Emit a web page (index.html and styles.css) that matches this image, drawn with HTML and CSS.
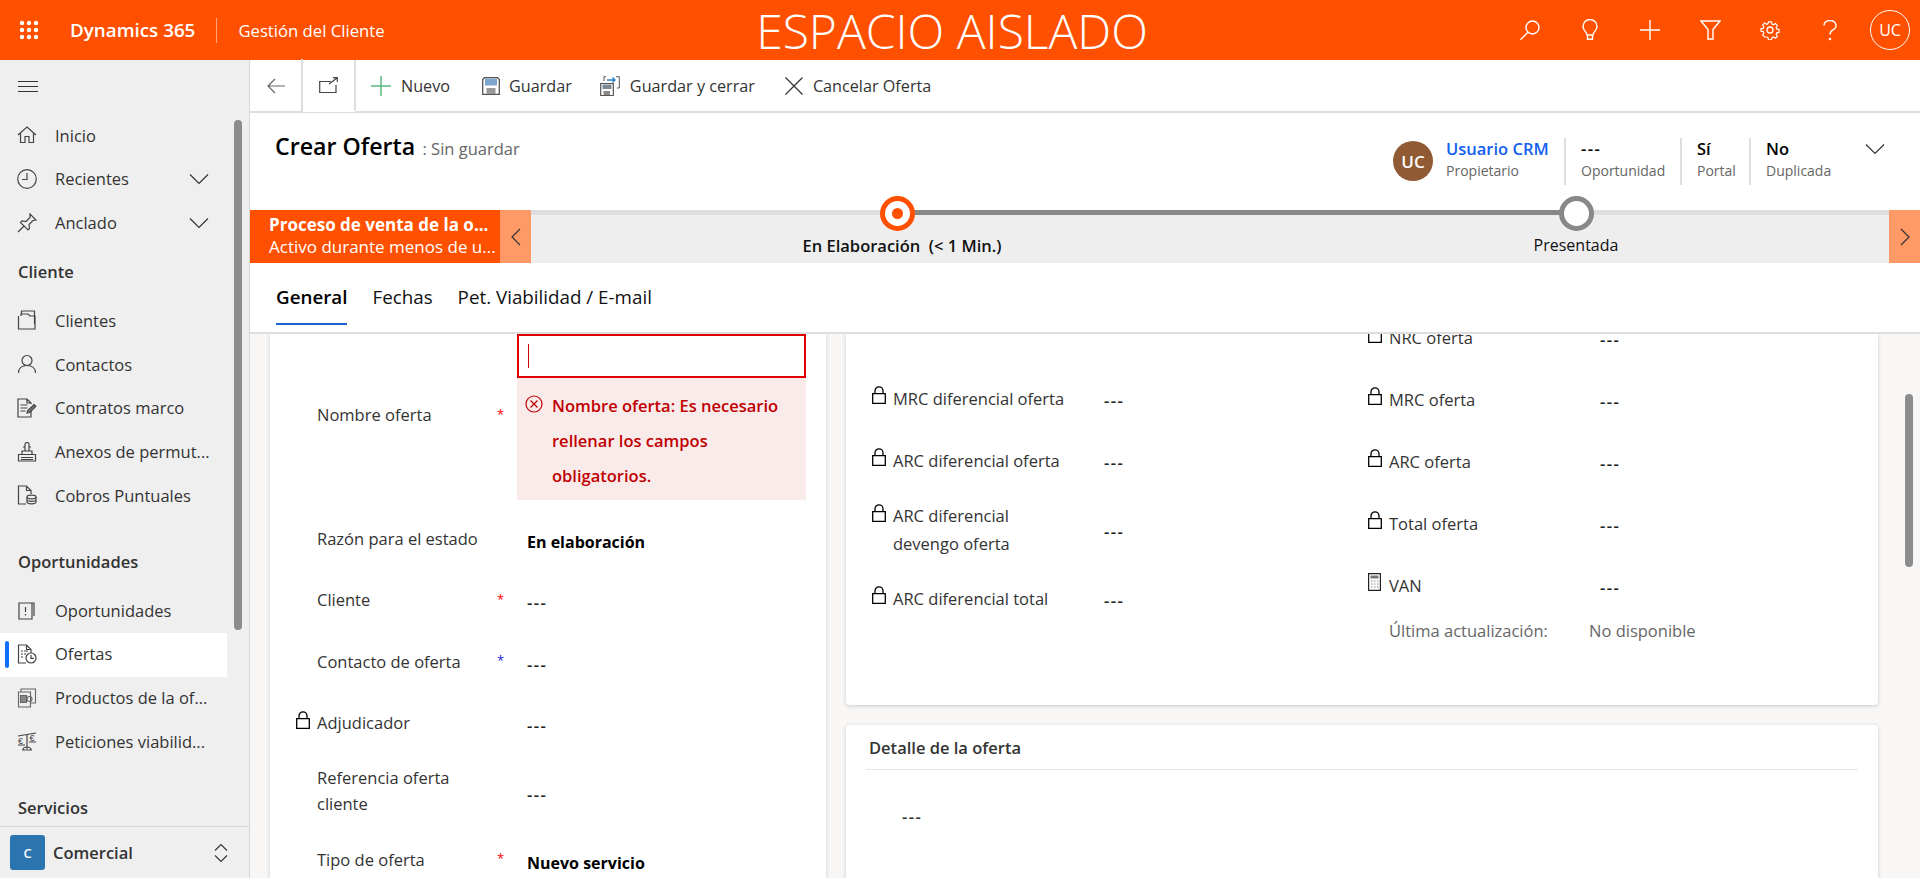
FILE: index.html
```html
<!DOCTYPE html>
<html lang="es">
<head>
    <meta charset="UTF-8">
    <title>Crear Oferta</title>
    <link rel="stylesheet" href="styles.css">
</head>
<body>
    <svg class="defs" width="0" height="0">
        <symbol id="lock" viewBox="0 0 14 18"><path d="M3 8V4.8a4 4 0 0 1 8 0V8M.7 7.7h12.6v9.6H.7z" fill="none" stroke="#000" stroke-width="1.3"/></symbol>
        <symbol id="chev" viewBox="0 0 20 12"><path d="M1 1.5l9 9 9-9" fill="none" stroke="#333" stroke-width="1.2"/></symbol>
    </svg>

    <header class="topbar">
        <div class="brand">
            <svg class="waffle" width="20" height="20" viewBox="0 0 20 20" fill="#fff"><circle cx="3" cy="3" r="2.2"/><circle cx="10" cy="3" r="2.2"/><circle cx="17" cy="3" r="2.2"/><circle cx="3" cy="10" r="2.2"/><circle cx="10" cy="10" r="2.2"/><circle cx="17" cy="10" r="2.2"/><circle cx="3" cy="17" r="2.2"/><circle cx="10" cy="17" r="2.2"/><circle cx="17" cy="17" r="2.2"/></svg>
            <span class="product">Dynamics 365</span>
            <span class="app-name">Gestión del Cliente</span>
        </div>
        <div class="env-title">ESPACIO AISLADO</div>
        <div class="top-actions">
            <span class="top-btn"><svg width="22" height="22" viewBox="0 0 22 22" fill="none" stroke="#fff" stroke-width="1.4"><circle cx="13.5" cy="8.5" r="6.5"/><path d="M9 13.2L1.5 20.7"/></svg></span>
            <span class="top-btn"><svg width="16" height="22" viewBox="0 0 16 22" fill="none" stroke="#fff" stroke-width="1.4"><path d="M5 16c0-3-4-4.5-4-8.5a7 7 0 0 1 14 0c0 4-4 5.5-4 8.5zM5.5 16v4.3h5V16"/></svg></span>
            <span class="top-btn"><svg width="20" height="20" viewBox="0 0 20 20" stroke="#fff" stroke-width="1.4"><path d="M0 10h20M10 0v20"/></svg></span>
            <span class="top-btn"><svg width="21" height="20" viewBox="0 0 21 20" fill="none" stroke="#fff" stroke-width="1.4"><path d="M1 1h19l-7 8.5V19H8V9.5z"/></svg></span>
            <span class="top-btn"><svg width="20" height="20" viewBox="0 0 20 20" fill="none" stroke="#fff" stroke-width="1.3"><circle cx="10" cy="10" r="3"/><path d="M8.3 1h3.4l.5 2.5 1.6.7 2.2-1.4 2.2 2.2-1.4 2.2.7 1.6 2.5.5v3.4l-2.5.5-.7 1.6 1.4 2.2-2.2 2.2-2.2-1.4-1.6.7-.5 2.5H8.3l-.5-2.5-1.6-.7L4 17.8l-2.2-2.2 1.4-2.2-.7-1.6L0 11.3V8.7l2.5-.5.7-1.6L1.800 4.4 4 2.2l2.2 1.4 1.6-.7z" transform="translate(1 1) scale(.9)"/></svg></span>
            <span class="top-btn"><svg width="14" height="21" viewBox="0 0 14 21" fill="none" stroke="#fff" stroke-width="1.4"><path d="M1 5.5a6 5 0 1 1 9 4.3c-2 1.2-3 2.2-3 4.7"/><circle cx="7" cy="19" r=".6" fill="#fff"/></svg></span>
            <span class="top-btn"><span class="me">UC</span></span>
        </div>
    </header>

    <div class="shell">
        <nav class="sitemap">
            <div class="burger"><svg width="20" height="11" viewBox="0 0 20 11" stroke="#333" stroke-width="1"><path d="M0 .5h20M0 5.5h20M0 10.5h20"/></svg></div>
            <div class="nav-list">
                <a class="nav-item"><svg class="ni" width="20" height="20" viewBox="0 0 20 20" fill="none" stroke="#444" stroke-width="1.2"><path d="M1 10l9-8 9 8M3.500 8v9.500H8v-6h4v6h4.500V8"/></svg>Inicio</a>
                <a class="nav-item"><svg class="ni" width="20" height="20" viewBox="0 0 20 20" fill="none" stroke="#444" stroke-width="1.2"><circle cx="10" cy="10" r="9.3"/><path d="M10 4v6.5H5"/></svg>Recientes<svg class="nav-chev" width="20" height="12"><use href="#chev"/></svg></a>
                <a class="nav-item"><svg class="ni" width="20" height="20" viewBox="0 0 20 20" fill="none" stroke="#444" stroke-width="1.2"><path d="M13 1l6 6-3 .5-4 4 .5 4L11 17 3.5 9.5 5 8l4 .5 4-4zM7 13l-6 6"/></svg>Anclado<svg class="nav-chev" width="20" height="12"><use href="#chev"/></svg></a>

                <div class="nav-head nav-head-first">Cliente</div>
                <a class="nav-item"><svg class="ni" width="20" height="20" viewBox="0 0 20 20" fill="none" stroke="#444" stroke-width="1.2"><path d="M1.5 6v13H18V6h-5l-2-2H4v2M4.500 4V1h13v13"/></svg>Clientes</a>
                <a class="nav-item"><svg class="ni" width="20" height="20" viewBox="0 0 20 20" fill="none" stroke="#444" stroke-width="1.2"><circle cx="10" cy="6.5" r="5"/><path d="M1.5 19c0-5 3.500-7.500 8.500-7.500s8.500 2.500 8.500 7.500"/></svg>Contactos</a>
                <a class="nav-item"><svg class="ni" width="20" height="20" viewBox="0 0 20 20" fill="none" stroke="#444" stroke-width="1.2"><path d="M14 11v8H1V1h9l4 4v1M10 1v4h4M3.5 7h7M3.5 10h7M3.5 13h5"/><path d="M10 15l.8-2.5L17 6.5l1.800 1.800-6 6.200z" fill="#777"/></svg>Contratos marco</a>
                <a class="nav-item"><svg class="ni" width="20" height="20" viewBox="0 0 20 20" fill="none" stroke="#444" stroke-width="1.2"><path d="M1.5 12.5h17V19h-17zM5 12.5V9h10v3.5M8 9V2.5a2 2 0 0 1 4 0V9M6 5h2M12 5h2M4 15.5h12M4 17.5h12"/></svg>Anexos de permut...</a>
                <a class="nav-item"><svg class="ni" width="20" height="20" viewBox="0 0 20 20" fill="none" stroke="#444" stroke-width="1.2"><path d="M9 19H1.5V1h8L14 5.5V9M9.500 1v4.500H14"/><ellipse cx="14.5" cy="12" rx="4.5" ry="1.8"/><path d="M10 12v5c0 1 2 1.800 4.500 1.800S19 18 19 17v-5M10 14.500c0 1 2 1.800 4.500 1.800s4.500-.8 4.500-1.800"/></svg>Cobros Puntuales</a>

                <div class="nav-head">Oportunidades</div>
                <a class="nav-item"><svg class="ni" width="20" height="20" viewBox="0 0 20 20" fill="none" stroke="#444" stroke-width="1.2"><path d="M2 3v16h13V3zM7 3h10v13"/><path d="M8.5 7v5M8.5 14v1.5"/></svg>Oportunidades</a>
                <a class="nav-item nav-item-on"><svg class="ni" width="20" height="20" viewBox="0 0 20 20" fill="none" stroke="#444" stroke-width="1.2"><path d="M9 19H1.500V1h8L14 5.500V9M9.500 1v4.500H14M4 7h2M7 7h4M4 10h2M7 10h2M4 13h2"/><circle cx="14" cy="14" r="5"/><path d="M14 11v3.3h3"/></svg>Ofertas</a>
                <a class="nav-item"><svg class="ni" width="20" height="20" viewBox="0 0 20 20" fill="none" stroke="#666" stroke-width="1.1"><path d="M1.5 4h12v15h-12zM4 4V1h14.500v14h-5"/><path d="M3.5 7.5h6v7h-6z" fill="#888"/><circle cx="12.5" cy="11" r="2.5"/></svg>Productos de la of...</a>
                <a class="nav-item"><svg class="ni" width="20" height="20" viewBox="0 0 20 20" fill="none" stroke="#444" stroke-width="1.2"><path d="M1 5l18-3M10 3v15M5 19h10M6 19c0-2 2-3 4-3s4 1 4 3M1 14h7M12 11h7"/><text x="1" y="13" font-size="9" fill="#444" stroke="none" font-family="Liberation Sans">€</text><text x="12.5" y="10" font-size="9" fill="#444" stroke="none" font-family="Liberation Sans">€</text></svg>Peticiones viabilid...</a>

                <div class="nav-head">Servicios</div>
            </div>
            <div class="area-switch">
                <span class="area-tile">C</span>
                <span class="area-name">Comercial</span>
                <svg width="14" height="20" viewBox="0 0 14 20" fill="none" stroke="#333" stroke-width="1.1"><path d="M1 7.500l6-6 6 6M1 12.500l6 6 6-6"/></svg>
            </div>
            <span class="nav-thumb"></span>
        </nav>

        <main class="workspace">
            <div class="toolbar">
                <span class="tool-nav"><svg width="18" height="16" viewBox="0 0 18 16" fill="none" stroke="#666" stroke-width="1.2"><path d="M18 8H1M8 1L1 8l7 7"/></svg></span>
                <span class="tool-nav tool-nav-b"><svg width="19" height="16" viewBox="0 0 19 16" fill="none" stroke="#444" stroke-width="1.2"><path d="M17 8v7.500H.7V4.500h11M10 7l8-6M14 .7h4.300V5"/></svg></span>
                <a class="tool tool-new"><svg width="20" height="20" viewBox="0 0 20 20" stroke="#5cb97f" stroke-width="1.5"><path d="M0 10h20M10 0v20"/></svg>Nuevo</a>
                <a class="tool tool-save"><svg width="18" height="18" viewBox="0 0 18 18"><path d="M.7 2.500 2.500.7h13l1.800 1.800v15H.7z" fill="#fff" stroke="#555" stroke-width="1.3"/><path d="M3 1.500h12v7H3z" fill="#7ea6cc"/><path d="M4.500 11h9v6h-9z" fill="#999"/></svg>Guardar</a>
                <a class="tool tool-saveclose"><svg width="20" height="20" viewBox="0 0 20 20"><path d="M.7 7.500h12.600v12H.7z" fill="#fff" stroke="#555" stroke-width="1.2"/><path d="M2.500 8.500h9V13h-9z" fill="#7c8a96"/><path d="M3.500 15H10v4H3.500z" fill="#888"/><path d="M4 5V.7h2M16 .7h3.300V12H17" fill="none" stroke="#555"/><path d="M7 4h8M12.500 1.500 15 4l-2.500 2.500" fill="none" stroke="#2a7ec0" stroke-width="1.3"/></svg>Guardar y cerrar</a>
                <a class="tool tool-cancel"><svg width="18" height="18" viewBox="0 0 18 18" stroke="#333" stroke-width="1.2"><path d="M.5.5l17 17M17.500.5l-17 17"/></svg>Cancelar Oferta</a>
            </div>

            <div class="record-head">
                <div class="record-title"><span class="record-name">Crear Oferta</span><span class="record-state"> : Sin guardar</span></div>
                <div class="head-fields">
                    <span class="owner-pic">UC</span>
                    <div class="hf hf-owner"><a class="hf-link">Usuario CRM</a><span class="hf-label">Propietario</span></div>
                    <div class="hf hf-op"><span class="hf-value dash">---</span><span class="hf-label">Oportunidad</span></div>
                    <div class="hf hf-portal"><span class="hf-value">Sí</span><span class="hf-label">Portal</span></div>
                    <div class="hf hf-dup"><span class="hf-value">No</span><span class="hf-label">Duplicada</span></div>
                    <svg class="head-chev" width="20" height="12"><use href="#chev"/></svg>
                </div>
            </div>

            <div class="bpf">
                <div class="bpf-flag"><strong>Proceso de venta de la o...</strong><span>Activo durante menos de u...</span></div>
                <span class="bpf-arrow"><svg width="10" height="18" viewBox="0 0 10 18" fill="none" stroke="#333" stroke-width="1.2"><path d="M9 1L1 9l8 8"/></svg></span>
                <div class="bpf-track">
                    <span class="bpf-line"></span>
                    <div class="stage stage-on"><span class="stage-dot"></span><span class="stage-label">En Elaboración&nbsp; (&lt; 1 Min.)</span></div>
                    <div class="stage stage-next"><span class="stage-dot"></span><span class="stage-label">Presentada</span></div>
                </div>
                <span class="bpf-arrow"><svg width="10" height="18" viewBox="0 0 10 18" fill="none" stroke="#333" stroke-width="1.2"><path d="M1 1l8 8-8 8"/></svg></span>
            </div>

            <div class="tabs">
                <a class="tab tab-on">General</a>
                <a class="tab">Fechas</a>
                <a class="tab">Pet. Viabilidad / E-mail</a>
            </div>

            <div class="form">
                <section class="card card-main">
                    <div class="field field-name">
                        <span class="lock-slot"></span>
                        <span class="f-label">Nombre oferta</span>
                        <span class="req">*</span>
                        <div class="f-input">
                            <div class="text-box"><span class="caret"></span></div>
                            <div class="err-box">
                                <svg width="18" height="18" viewBox="0 0 18 18" fill="none" stroke="#c00000" stroke-width="1.2"><circle cx="9" cy="9" r="8"/><path d="M5.500 5.500l7 7M12.500 5.500l-7 7"/></svg>
                                <span>Nombre oferta: Es necesario rellenar los campos obligatorios.</span>
                            </div>
                        </div>
                    </div>
                    <div class="field"><span class="lock-slot"></span><span class="f-label">Razón para el estado</span><span class="req"></span><span class="f-val f-bold">En elaboración</span></div>
                    <div class="field"><span class="lock-slot"></span><span class="f-label">Cliente</span><span class="req">*</span><span class="f-val dash">---</span></div>
                    <div class="field"><span class="lock-slot"></span><span class="f-label">Contacto de oferta</span><span class="req req-blue">*</span><span class="f-val dash">---</span></div>
                    <div class="field"><span class="lock-slot"><svg width="14" height="18"><use href="#lock"/></svg></span><span class="f-label">Adjudicador</span><span class="req"></span><span class="f-val dash">---</span></div>
                    <div class="field field-tall"><span class="lock-slot"></span><span class="f-label">Referencia oferta cliente</span><span class="req"></span><span class="f-val dash">---</span></div>
                    <div class="field"><span class="lock-slot"></span><span class="f-label">Tipo de oferta</span><span class="req">*</span><span class="f-val f-bold">Nuevo servicio</span></div>
                </section>

                <div class="side">
                    <section class="card card-amounts">
                        <div class="amount-col amount-left">
                            <div class="amount"><span class="lock-slot"><svg width="14" height="18"><use href="#lock"/></svg></span><span class="a-label">MRC diferencial oferta</span><span class="a-val dash">---</span></div>
                            <div class="amount"><span class="lock-slot"><svg width="14" height="18"><use href="#lock"/></svg></span><span class="a-label">ARC diferencial oferta</span><span class="a-val dash">---</span></div>
                            <div class="amount amount-tall"><span class="lock-slot"><svg width="14" height="18"><use href="#lock"/></svg></span><span class="a-label">ARC diferencial<br>devengo oferta</span><span class="a-val dash">---</span></div>
                            <div class="amount"><span class="lock-slot"><svg width="14" height="18"><use href="#lock"/></svg></span><span class="a-label">ARC diferencial total</span><span class="a-val dash">---</span></div>
                        </div>
                        <div class="amount-col amount-right">
                            <div class="amount"><span class="lock-slot"><svg width="14" height="18"><use href="#lock"/></svg></span><span class="a-label">NRC oferta</span><span class="a-val dash">---</span></div>
                            <div class="amount"><span class="lock-slot"><svg width="14" height="18"><use href="#lock"/></svg></span><span class="a-label">MRC oferta</span><span class="a-val dash">---</span></div>
                            <div class="amount"><span class="lock-slot"><svg width="14" height="18"><use href="#lock"/></svg></span><span class="a-label">ARC oferta</span><span class="a-val dash">---</span></div>
                            <div class="amount"><span class="lock-slot"><svg width="14" height="18"><use href="#lock"/></svg></span><span class="a-label">Total oferta</span><span class="a-val dash">---</span></div>
                            <div class="amount"><span class="lock-slot"><svg width="13" height="18" viewBox="0 0 13 18"><path d="M.6.6h11.800v16.800H.6z" fill="#fff" stroke="#222" stroke-width="1.2"/><path d="M2.500 2.500h8v3h-8z" fill="#777"/><path d="M3 8h1.500M6 8h1.500M9 8h1.500M3 11h1.500M6 11h1.500M9 11h1.500M3 14h1.500M6 14h1.500M9 14h1.500" stroke="#888"/></svg></span><span class="a-label">VAN</span><span class="a-val dash">---</span></div>
                            <div class="calc-note"><span class="note-label">Última actualización:</span><span>No disponible</span></div>
                        </div>
                    </section>
                    <section class="card card-detail">
                        <h2 class="detail-title">Detalle de la oferta</h2>
                        <div class="detail-val dash">---</div>
                    </section>
                </div>
            </div>
            <span class="form-thumb"></span>
        </main>
    </div>
</body>
</html>
```
FILE: styles.css
```css
* {
    box-sizing: border-box;
}
body {
    margin: 0;
    height: 100vh;
    display: flex;
    flex-direction: column;
    overflow: hidden;
    font-family: "Open Sans", "Liberation Sans", sans-serif;
    font-size: 16.5px;
    color: #333;
    background: #fff;
}
.defs {
    position: absolute;
}
svg {
    flex: none;
    display: block;
}
.dash {
    font-weight: 600;
    letter-spacing: 1.4px;
}

/* top bar */
.topbar {
    height: 60px;
    flex: none;
    display: flex;
    align-items: center;
    background: #ff5000;
    color: #fff;
}
.brand {
    width: 404px;
    display: flex;
    align-items: center;
    padding-left: 19px;
}
.product {
    margin-left: 31px;
    padding-right: 21px;
    font-size: 18.8px;
    font-weight: 600;
    white-space: nowrap;
}
.app-name {
    padding-left: 21px;
    font-size: 16.7px;
    white-space: nowrap;
    border-left: 1px solid #ffa57f;
    line-height: 25px;
}
.env-title {
    flex: 1;
    text-align: center;
    font-size: 48px;
    font-weight: 300;
    white-space: nowrap;
}
.top-actions {
    display: flex;
    width: 420px;
}
.top-btn {
    width: 60px;
    height: 60px;
    display: flex;
    align-items: center;
    justify-content: center;
}
.me {
    width: 40px;
    height: 40px;
    border-radius: 50%;
    border: 1px solid #fff;
    display: flex;
    align-items: center;
    justify-content: center;
    font-size: 16px;
}

.shell {
    flex: 1;
    min-height: 0;
    display: flex;
}

/* site map */
.sitemap {
    width: 250px;
    flex: none;
    display: flex;
    flex-direction: column;
    position: relative;
    background: #efefef;
    border-right: 1px solid #d8d8d8;
}
.burger {
    height: 54px;
    flex: none;
    padding: 21px 0 0 18px;
}
.nav-list {
    flex: 1;
    min-height: 0;
    overflow: hidden;
}
.nav-item {
    width: 227px;
    height: 43.75px;
    display: flex;
    align-items: center;
    position: relative;
    padding-left: 17px;
    padding-bottom: 1.5px;
    white-space: nowrap;
}
.ni {
    margin-right: 18px;
}
.nav-chev {
    margin-left: auto;
    margin-right: 18px;
}
.nav-item-on {
    background: #fff;
}
.nav-item-on::before {
    content: "";
    position: absolute;
    left: 5px;
    top: 8px;
    width: 4px;
    height: 27px;
    border-radius: 2px;
    background: #0f6fff;
}
.nav-head {
    margin-top: 17px;
    padding: 16px 0 16px 18px;
    line-height: 22px;
    font-weight: 600;
}
.nav-head-first {
    margin-top: 0;
}
.area-switch {
    height: 52px;
    flex: none;
    display: flex;
    align-items: center;
    padding: 0 21px 0 10px;
    border-top: 1px solid #d8d8d8;
}
.area-tile {
    width: 35px;
    height: 35px;
    display: flex;
    align-items: center;
    justify-content: center;
    border-radius: 3px;
    background: #2a74b0;
    color: #fff;
    font-size: 13px;
    font-weight: 600;
}
.area-name {
    flex: 1;
    margin-left: 8px;
    font-weight: 600;
}
.nav-thumb {
    position: absolute;
    left: 234px;
    top: 60px;
    width: 8px;
    height: 510px;
    border-radius: 4px;
    background: #8c8c8c;
}

/* main column */
.workspace {
    flex: 1;
    min-width: 0;
    display: flex;
    flex-direction: column;
    position: relative;
}
.toolbar {
    height: 53px;
    flex: none;
    display: flex;
    align-items: center;
    border-bottom: 2px solid #dedede;
}
.tool-nav {
    width: 53px;
    height: 53px;
    flex: none;
    display: flex;
    align-items: center;
    justify-content: center;
    border-right: 2px solid #dedede;
}
.tool-nav-b {
    height: 52px;
    align-self: flex-start;
    border-bottom: 2px solid #fff;
}
.tool {
    display: flex;
    align-items: center;
    font-size: 16.2px;
    white-space: nowrap;
}
.tool svg {
    margin-right: 10px;
}
.tool-new {
    margin-left: 15px;
}
.tool-save {
    margin-left: 32px;
}
.tool-save svg {
    margin-right: 9px;
}
.tool-saveclose {
    margin-left: 28px;
}
.tool-cancel {
    margin-left: 30px;
}

.record-head {
    height: 97px;
    flex: none;
    display: flex;
    justify-content: space-between;
}
.record-title {
    padding: 17px 0 0 25px;
}
.record-name {
    font-size: 23.2px;
    font-weight: 600;
    color: #000;
}
.record-state {
    color: #666;
    margin-left: 3px;
}
.head-fields {
    display: flex;
    align-items: flex-start;
    padding-top: 25px;
}
.owner-pic {
    width: 40px;
    height: 40px;
    margin-top: 3px;
    margin-right: 13px;
    border-radius: 50%;
    background: #8f5a34;
    color: #fff;
    font-size: 17px;
    font-weight: 600;
    display: flex;
    align-items: center;
    justify-content: center;
}
.hf {
    height: 47px;
    display: flex;
    flex-direction: column;
    padding-left: 15px;
    border-left: 2px solid #dedede;
    white-space: nowrap;
    line-height: 22px;
}
.hf-owner {
    width: 118px;
    padding-left: 0;
    border-left: 0;
}
.hf-op {
    width: 116px;
}
.hf-portal {
    width: 69px;
}
.hf-dup {
    width: 97px;
}
.hf-link {
    font-weight: 600;
    color: #1160f0;
}
.hf-value {
    font-weight: 600;
    color: #000;
}
.hf-label {
    font-size: 14px;
    color: #666;
}
.head-chev {
    margin: 5px 35px 0 19px;
}

/* process bar */
.bpf {
    height: 53px;
    flex: none;
    display: flex;
}
.bpf-flag {
    width: 250px;
    flex: none;
    padding: 4px 0 0 19px;
    display: flex;
    flex-direction: column;
    overflow: hidden;
    background: #ff5000;
    color: #fff;
    font-size: 17px;
    line-height: 21.5px;
    white-space: nowrap;
}
.bpf-flag strong {
    font-weight: 700;
}
.bpf-arrow {
    width: 31px;
    flex: none;
    display: flex;
    align-items: center;
    justify-content: center;
    background: #ff9966;
}
.bpf-track {
    flex: 1;
    min-width: 0;
    position: relative;
    display: flex;
    background: #eee;
    border-top: 5px solid #dedede;
    padding-left: 316px;
}
.bpf-line {
    position: absolute;
    left: 366px;
    top: -5px;
    width: 680px;
    height: 5px;
    background: #8a8886;
}
.stage {
    width: 100px;
    flex: none;
    display: flex;
    flex-direction: column;
    align-items: center;
    position: relative;
    margin-right: 579px;
}
.stage-dot {
    width: 35px;
    height: 35px;
    margin-top: -19px;
    border-radius: 50%;
    background: #fff;
    border: 5px solid #8a8886;
    position: relative;
}
.stage-on .stage-dot {
    border-color: #ff5000;
}
.stage-on .stage-dot::after {
    content: "";
    position: absolute;
    left: 7px;
    top: 7px;
    width: 11px;
    height: 11px;
    border-radius: 50%;
    background: #ff5000;
}
.stage-label {
    margin-top: 3px;
    font-size: 16px;
    white-space: nowrap;
    color: #111;
}
.stage-on .stage-label {
    font-size: 16.5px;
    font-weight: 600;
    margin-left: 10px;
}
.stage-next {
    margin-right: 0;
}

/* tabs */
.tabs {
    height: 71px;
    flex: none;
    display: flex;
    padding-left: 26px;
    gap: 25px;
    border-bottom: 2px solid #dedede;
}
.tab {
    height: 62px;
    padding-top: 21px;
    font-size: 18.8px;
    color: #111;
    white-space: nowrap;
}
.tab-on {
    font-weight: 600;
    color: #000;
    border-bottom: 2px solid #1a5fd0;
}

/* form body */
.form {
    flex: 1;
    min-height: 0;
    display: flex;
    gap: 20px;
    padding: 0 42px 0 20px;
    overflow: hidden;
    background: #f8f7f6;
}
.card {
    background: #fff;
    box-shadow: 0 1px 4px rgba(0, 0, 0, .18);
}
.card-main {
    width: 556px;
    flex: none;
    padding-left: 26px;
}
.side {
    flex: 1;
    min-width: 0;
    display: flex;
    flex-direction: column;
    gap: 20px;
}
.lock-slot {
    width: 21px;
    flex: none;
    margin-top: -7px;
}
.field {
    height: 61.5px;
    display: flex;
    align-items: center;
}
.field-name {
    height: 174px;
    padding-bottom: 12px;
}
.field-tall {
    height: 75px;
}
.field-tall .f-label {
    margin-top: -2px;
}
.f-label {
    width: 183px;
    flex: none;
    padding-right: 15px;
    line-height: 26px;
}
.req {
    width: 17px;
    flex: none;
    margin-left: -3px;
    margin-right: 3px;
    color: #f00;
    font-size: 13px;
    margin-top: -3px;
}
.req-blue {
    color: #2020e0;
}
.f-val {
    padding-left: 10px;
    margin-top: 5px;
    color: #222;
}
.f-bold {
    margin-top: 6px;
    font-size: 16px;
    font-weight: 700;
    color: #000;
}
.f-input {
    width: 289px;
    flex: none;
    align-self: flex-start;
}
.text-box {
    height: 44px;
    padding: 8px 9px;
    border: 2px solid #e00000;
}
.caret {
    display: block;
    width: 1px;
    height: 24px;
    background: #c00;
}
.err-box {
    height: 122px;
    display: flex;
    padding: 17px 10px 0 8px;
    gap: 9px;
    background: #faebeb;
    color: #c00000;
    font-weight: 600;
    line-height: 35px;
}
.err-box span {
    margin-top: -7px;
}

/* amounts card */
.card-amounts {
    height: 371px;
    flex: none;
    display: flex;
    padding-left: 26px;
    overflow: hidden;
    border-radius: 0 0 4px 4px;
}
.amount-col {
    width: 496px;
    flex: none;
}
.amount-left {
    padding-top: 33px;
}
.amount-right {
    margin-top: -28px;
}
.amount {
    height: 62px;
    display: flex;
    align-items: center;
}
.amount-tall {
    height: 76px;
}
.amount-tall .lock-slot {
    align-self: flex-start;
    margin-top: 13px;
}
.a-label {
    width: 211px;
    flex: none;
    margin-top: 1px;
    padding-right: 20px;
    line-height: 28px;
    white-space: nowrap;
}
.a-val {
    margin-top: 5px;
    color: #222;
}
.calc-note {
    display: flex;
    height: 28px;
    align-items: center;
    padding-left: 21px;
    color: #666;
}
.note-label {
    width: 200px;
    flex: none;
}
.card-detail {
    flex: 1;
    padding: 0 20px;
    border-radius: 4px 4px 0 0;
}
.detail-title {
    height: 45px;
    margin: 0;
    padding: 11px 0 0 3px;
    font-size: 16.5px;
    font-weight: 600;
    border-bottom: 1px solid #e8e8e8;
}
.detail-val {
    padding: 35px 0 0 36px;
}
.form-thumb {
    position: absolute;
    left: 1655px;
    top: 334px;
    width: 8px;
    height: 173px;
    border-radius: 4px;
    background: #8c8c8c;
}
```
